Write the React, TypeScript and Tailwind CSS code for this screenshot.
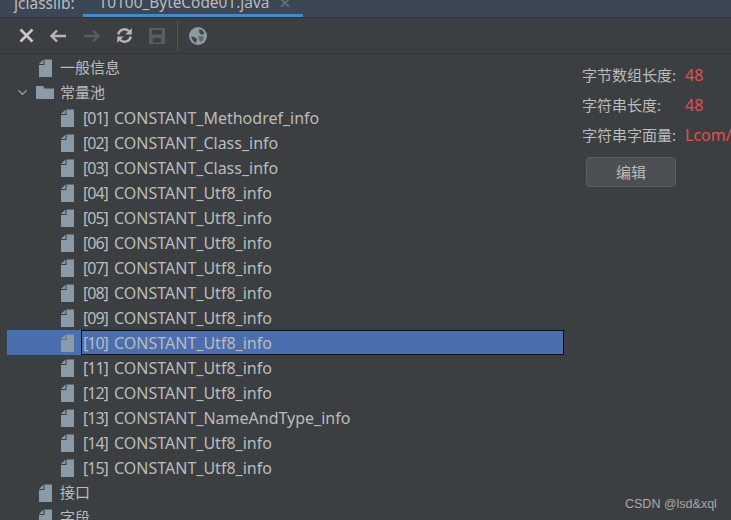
import { ChevronDown } from 'lucide-react';

const FONT = "font-['Noto_Sans','Noto_Sans_CJK_SC',sans-serif]";

const constants = [
  'Methodref', 'Class', 'Class', 'Utf8', 'Utf8', 'Utf8', 'Utf8', 'Utf8', 'Utf8',
  'Utf8', 'Utf8', 'Utf8', 'NameAndType', 'Utf8', 'Utf8',
];

function FileIcon() {
  return (
    <svg width="13" height="18" viewBox="0 0 13 18" className="shrink-0">
      <path d="M5.5 .5H13V18H0V6H5.5z" fill="#8a9aa6" />
      <path d="M4.5 .5V5H0z" fill="#8a9aa6" />
    </svg>
  );
}

function FolderIcon() {
  return (
    <svg width="18" height="13" viewBox="0 0 18 13" className="shrink-0">
      <path d="M0 0h7l1.500 2.500H18V13H0z" fill="#8a9aa6" />
    </svg>
  );
}

function CloseIcon() {
  return (
    <svg width="15" height="15" viewBox="0 0 15 15">
      <path d="M1.500 1.500l12 12M13.500 1.500l-12 12" stroke="#c8cacc" strokeWidth="2.600" fill="none" />
    </svg>
  );
}

function ArrowIcon({ color, flip }: { color: string; flip?: boolean }) {
  return (
    <svg width="18" height="14" viewBox="0 0 18 14" className={flip ? 'rotate-180' : ''}>
      <path d="M17 7H3M8 1.500L2.500 7 8 12.500" stroke={color} strokeWidth="2.400" fill="none" />
    </svg>
  );
}

function RefreshIcon() {
  return (
    <svg width="17" height="17" viewBox="0 0 17 17">
      <path d="M2.200 7.500A6.300 6.300 0 0 1 13 4.300" stroke="#b4b6b8" strokeWidth="2.400" fill="none" />
      <path d="M15.800 1v6.500h-6.500z" fill="#b4b6b8" />
      <path d="M14.800 9.500A6.300 6.300 0 0 1 4 12.700" stroke="#b4b6b8" strokeWidth="2.400" fill="none" />
      <path d="M1.200 16V9.500h6.500z" fill="#b4b6b8" />
    </svg>
  );
}

function SaveIcon() {
  return (
    <svg width="16" height="16" viewBox="0 0 16 16">
      <path fillRule="evenodd" d="M0 0h16v16H0zM3 2v4.500h10V2zM4 10v4.500h8V10z" fill="#5a5d5f" />
    </svg>
  );
}

function GlobeIcon() {
  return (
    <svg width="18" height="18" viewBox="0 0 18 18">
      <circle cx="9" cy="9" r="9" fill="#8d9aa3" />
      <path d="M10 2.200c2.500.3 4.500 1.700 5.500 4L13 8 10.500 6z" fill="#3f4548" />
      <path d="M2.300 9.500l3.200.5 2.500 2.500-.8 3.300c-2.700-.8-4.600-3.300-4.900-6.300z" fill="#3f4548" />
      <path d="M9.500 9l5 .5c.6 2-.7 4.500-3 5.800L10 12z" fill="#5b666d" />
    </svg>
  );
}

function App() {
  return (
    <div className={`relative h-[520px] w-[731px] overflow-hidden bg-[#3c3f41] text-[15px] text-[#bbbbbb] ${FONT}`}>
      {/* tab strip */}
      <div className="flex h-[17px] items-start overflow-hidden bg-[#3b4754]">
        <span className="mt-[-9px] ml-[14px] whitespace-nowrap text-[15.5px] leading-[24px]">jclasslib:</span>
        <div className="relative ml-[8px] flex h-[17px] w-[220px] items-start pl-[16px]">
          <span className="mt-[-9px] whitespace-nowrap text-[15.4px] leading-[24px]">T0100_ByteCode01.java</span>
          <span className="mt-[-9px] ml-[10px] whitespace-nowrap text-[20px] leading-[24px] text-[#6e7275]">×</span>
          <div className="absolute bottom-0 left-0 h-[3px] w-full bg-[#4a88c7]" />
        </div>
      </div>

      {/* toolbar */}
      <div className="flex h-[37px] items-center border-y border-y-[#323232] pl-[19px]">
        <CloseIcon />
        <div className="ml-[15px]"><ArrowIcon color="#b4b6b8" /></div>
        <div className="ml-[16px]"><ArrowIcon color="#5a5d5f" flip /></div>
        <div className="ml-[15px]"><RefreshIcon /></div>
        <div className="ml-[16px]"><SaveIcon /></div>
        <div className="ml-[12px] mr-[11px] h-[29px] w-px bg-[#515355]" />
        <GlobeIcon />
      </div>

      <div className="flex">
        {/* tree */}
        <div className="w-[564px] shrink-0 pl-[7px] pt-[1px]">
          <div className="flex h-[25px] items-center pl-[32px]">
            <FileIcon />
            <span className="ml-[8px]">一般信息</span>
          </div>
          <div className="flex h-[25px] items-center pl-[8px]">
            <ChevronDown size={15} strokeWidth={2.2} className="text-[#a0a2a4]" />
            <span className="ml-[6px]"><FolderIcon /></span>
            <span className="ml-[6px]">常量池</span>
          </div>
          {constants.map((name, i) => {
            const index = `[${String(i + 1).padStart(2, '0')}]`;
            const selected = i === 9;
            return (
              <div
                key={i}
                className={`flex h-[25px] items-center pl-[54px] ${selected ? 'bg-[#4b6eaf]' : ''}`}
              >
                <FileIcon />
                <span
                  className={`ml-[7px] flex h-[25px] flex-1 items-center gap-[5px] whitespace-nowrap text-[16px] ${selected ? 'border border-[#0a0f1e] pl-[1px]' : 'pl-[2px]'}`}
                >
                  <span className="w-[26px] tracking-[-1px]">{index}</span>
                  <span>CONSTANT_{name}_info</span>
                </span>
              </div>
            );
          })}
          <div className="flex h-[25px] items-center pl-[32px]">
            <FileIcon />
            <span className="ml-[8px]">接口</span>
          </div>
          <div className="flex h-[25px] items-center pl-[32px]">
            <FileIcon />
            <span className="ml-[8px]">字段</span>
          </div>
        </div>

        {/* detail panel */}
        <div className="min-w-0 flex-1 pl-[18px] pt-[6px]">
          <div className="flex h-[30px] items-center">
            <span className="w-[104px] shrink-0">字节数组长度:</span>
            <span className="ml-[-1px] text-[16px] text-[#e64d4d]">48</span>
          </div>
          <div className="flex h-[30px] items-center">
            <span className="w-[104px] shrink-0">字符串长度:</span>
            <span className="ml-[-1px] text-[16px] text-[#e64d4d]">48</span>
          </div>
          <div className="flex h-[30px] items-center whitespace-nowrap">
            <span className="w-[104px] shrink-0">字符串字面量:</span>
            <span className="ml-[-1px] text-[16px] text-[#e64d4d]">Lcom/</span>
          </div>
          <button className="ml-[4px] mt-[7px] h-[30px] w-[90px] rounded-[4px] border border-[#5e6060] bg-[#4c5052]">
            编辑
          </button>
        </div>
      </div>

      <div className="pointer-events-none absolute left-[625px] top-[495px] font-['Liberation_Sans',sans-serif] text-[12.5px] text-[#a8a8a8]">
        CSDN @lsd&amp;xql
      </div>
    </div>
  );
}

export default App;
